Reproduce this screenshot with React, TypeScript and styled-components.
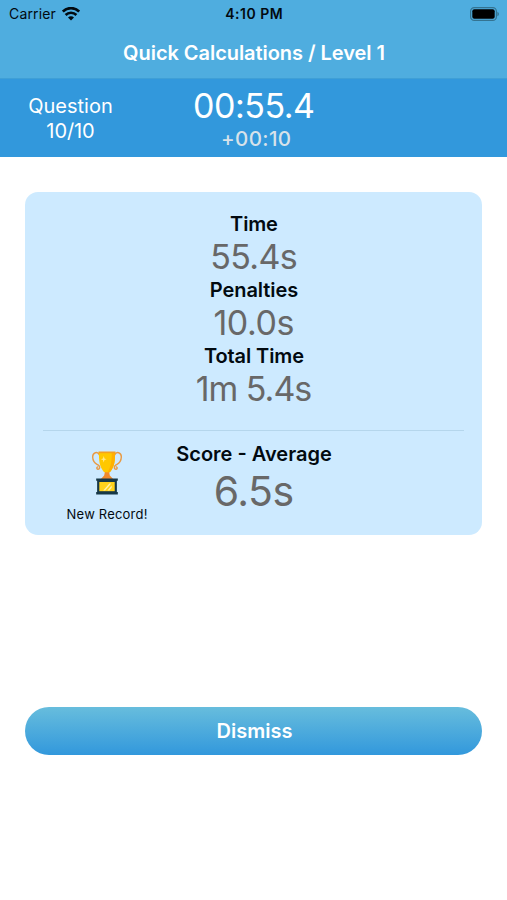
import React from "react";
import styled, { createGlobalStyle } from "styled-components";

const GlobalStyle = createGlobalStyle`
  * { box-sizing: border-box; }
  body {
    margin: 0;
    background: #fff;
    font-family: Inter, "Liberation Sans", sans-serif;
    color: #020a10;
  }
`;

const Screen = styled.main`
  display: flex;
  flex-direction: column;
  height: 900px;
  width: 507px;
  background: #fff;
`;

const StatusBar = styled.div`
  display: grid;
  grid-template-columns: 1fr auto 1fr;
  align-items: center;
  height: 27px;
  padding: 0 8px 0 9px;
  background: #4faddf;
`;

const StatusSide = styled.div<{ $end?: boolean }>`
  display: flex;
  align-items: center;
  gap: 6px;
  justify-content: ${(p) => (p.$end ? "flex-end" : "flex-start")};
`;

interface TextProps {
  $size: number;
  $line: number;
  $weight?: number;
  $spacing?: number;
  $color?: string;
}

const Text = styled.div<TextProps>`
  margin: 0 ${(p) => -(p.$spacing ?? 0)}px 0 0;
  font-size: ${(p) => p.$size}px;
  line-height: ${(p) => p.$line}px;
  font-weight: ${(p) => p.$weight ?? 400};
  letter-spacing: ${(p) => p.$spacing ?? 0}px;
  color: ${(p) => p.$color ?? "inherit"};
  white-space: nowrap;
  text-align: center;
`;

const Penalty = styled(Text)`
  padding-left: 4px;
`;

const NavBar = styled.header`
  display: flex;
  justify-content: center;
  height: 52px;
  padding: 13px 0 0 1px;
  background: #4faddf;
  border-bottom: 1px solid #3f9fd6;
  color: #fff;
`;

const TimerBar = styled.section`
  display: grid;
  grid-template-columns: 140px 227px 140px;
  height: 78px;
  background: #3298dc;
  color: #fff;
`;

const Stack = styled.div<{ $top: number }>`
  display: flex;
  flex-direction: column;
  align-items: center;
  padding-top: ${(p) => p.$top}px;
  padding-left: 1px;
`;

const Card = styled.section`
  display: flex;
  flex-direction: column;
  height: 343px;
  margin: 35px 25px 0;
  border-radius: 13px;
  background: #cdeaff;
`;

const Divider = styled.hr`
  width: 421px;
  height: 1px;
  margin: 21px auto 0;
  border: 0;
  background: #b5d6ec;
`;

const ScoreRow = styled.div`
  display: grid;
  grid-template-columns: 144px 169px 144px;
`;

const Record = styled(Stack)`
  padding-left: 20px;
`;

const Trophy = styled.svg`
  display: block;
  width: 32px;
  height: 44px;
  margin-bottom: 9px;
`;

const DismissButton = styled.button`
  display: flex;
  align-items: center;
  justify-content: center;
  height: 48px;
  margin: 172px 25px 0;
  padding: 0 0 0 2px;
  border: 0;
  border-radius: 24px;
  background: linear-gradient(#67bddd, #3298dc);
  color: #fff;
  font-family: inherit;
`;

const WifiIcon = () => (
  <svg width="18" height="14" viewBox="0 0 18 14">
    <g fill="none" stroke="#020a10" strokeWidth="2.6">
      <path d="M.8 4.500a11.600 11.600 0 0 1 16.400 0" />
      <path d="M3.600 8a7.600 7.600 0 0 1 10.800 0" />
    </g>
    <path d="M9 13.500 6 10.400a4.200 4.200 0 0 1 6 0z" fill="#020a10" />
  </svg>
);

const BatteryIcon = () => (
  <svg width="29" height="14" viewBox="0 0 29 14">
    <rect x=".6" y=".6" width="25.8" height="12.8" rx="3.7" fill="none" stroke="#347391" strokeWidth="1.2" />
    <rect x="2.3" y="2.3" width="22.4" height="9.4" rx="2" fill="#000" />
    <path d="M27.400 4.700c2 .8 2 3.800 0 4.600z" fill="#347391" />
  </svg>
);

const TrophyIcon = () => (
  <Trophy viewBox="0 0 34 44" preserveAspectRatio="none">
    <g fill="none" stroke="#e99a43" strokeWidth="1.5" strokeLinecap="round">
      <path d="M9 4C7-.2 1.600 1.300 1.800 6.200c.2 5.600 3.400 6.500 6 8 2.300 1.400 1.500 4.500-.6 4-1.400-.3-1.300-2-.2-2.300" />
      <path d="M25 4c2-4.200 7.400-2.700 7.200 2.200-.2 5.600-3.400 6.500-6 8-2.300 1.400-1.500 4.500.6 4 1.400-.3 1.300-2 .2-2.300" />
    </g>
    <path d="M15 20h4l1 4.500 3.500 3.500h-13l3.500-3.500z" fill="#f08a2c" />
    <path d="M8.500 1h17c.2 8-.2 14.500-5.400 20.300h-6.200C8.700 15.500 8.300 9 8.500 1z" fill="#ffc800" />
    <path d="M22 1h3.500c.2 8-.2 14.500-5.400 20.300h-2.600C21.300 16 22.200 9 22 1z" fill="#ffb000" />
    <path d="M8 .5h18v1.700H8z" fill="#f5a11f" />
    <path d="m13.500 5 .8 2.500 2.200.8-2.200.8-.8 2.500-.8-2.500-2.200-.8 2.200-.8z" fill="#ffe98a" />
    <path d="M5.500 27.500h23v2.300h-1V41h1v2.500h-23V41h1V29.800h-1z" fill="#173847" />
    <path d="M8.800 31h16.400v9.200H8.800z" fill="#ffd21c" />
    <path d="m13 39.500 6.500-7h2l-6.500 7zm4.500 0 4.500-5v2.300l-2.500 2.700z" fill="#fff2ac" />
  </Trophy>
);

const results = [
  { label: "Time", value: "55.4s", labelSpacing: -0.15, valueSpacing: -0.65 },
  { label: "Penalties", value: "10.0s", labelSpacing: -0.05, valueSpacing: -0.4 },
  { label: "Total Time", value: "1m 5.4s", labelSpacing: -0.1, valueSpacing: -1 },
];

export default function App() {
  return (
    <Screen>
      <GlobalStyle />
      <StatusBar>
        <StatusSide>
          <Text $size={14} $line={20} $spacing={0.15}>Carrier</Text>
          <WifiIcon />
        </StatusSide>
        <Text $size={14} $line={20} $weight={600} $spacing={0.5}>4:10 PM</Text>
        <StatusSide $end>
          <BatteryIcon />
        </StatusSide>
      </StatusBar>
      <NavBar>
        <Text as="h1" $size={20} $line={26} $weight={600} $spacing={-0.05}>
          Quick Calculations / Level 1
        </Text>
      </NavBar>
      <TimerBar>
        <Stack $top={15}>
          <Text $size={20} $line={25}>Question</Text>
          <Text $size={20} $line={25} $spacing={-0.1}>10/10</Text>
        </Stack>
        <Stack $top={7}>
          <Text $size={34} $line={40} $spacing={-0.5}>00:55.4</Text>
          <Penalty $size={20.5} $line={26} $weight={550} $spacing={0.4} $color="#d7e2ea">+00:10</Penalty>
        </Stack>
      </TimerBar>
      <Card>
        <Stack $top={19}>
          {results.map((item) => (
            <React.Fragment key={item.label}>
              <Text $size={20} $line={26} $weight={600} $spacing={item.labelSpacing}>{item.label}</Text>
              <Text $size={34} $line={40} $spacing={item.valueSpacing} $color="#686868">{item.value}</Text>
            </React.Fragment>
          ))}
        </Stack>
        <Divider />
        <ScoreRow>
          <Record $top={20}>
            <TrophyIcon />
            <Text $size={13} $line={20} $spacing={0.2}>New Record!</Text>
          </Record>
          <Stack $top={10}>
            <Text $size={20} $line={26} $weight={600}>Score - Average</Text>
            <Text $size={41} $line={48} $spacing={-0.5} $color="#686868">6.5s</Text>
          </Stack>
        </ScoreRow>
      </Card>
      <DismissButton type="button">
        <Text as="span" $size={20} $line={26} $weight={600}>Dismiss</Text>
      </DismissButton>
    </Screen>
  );
}
